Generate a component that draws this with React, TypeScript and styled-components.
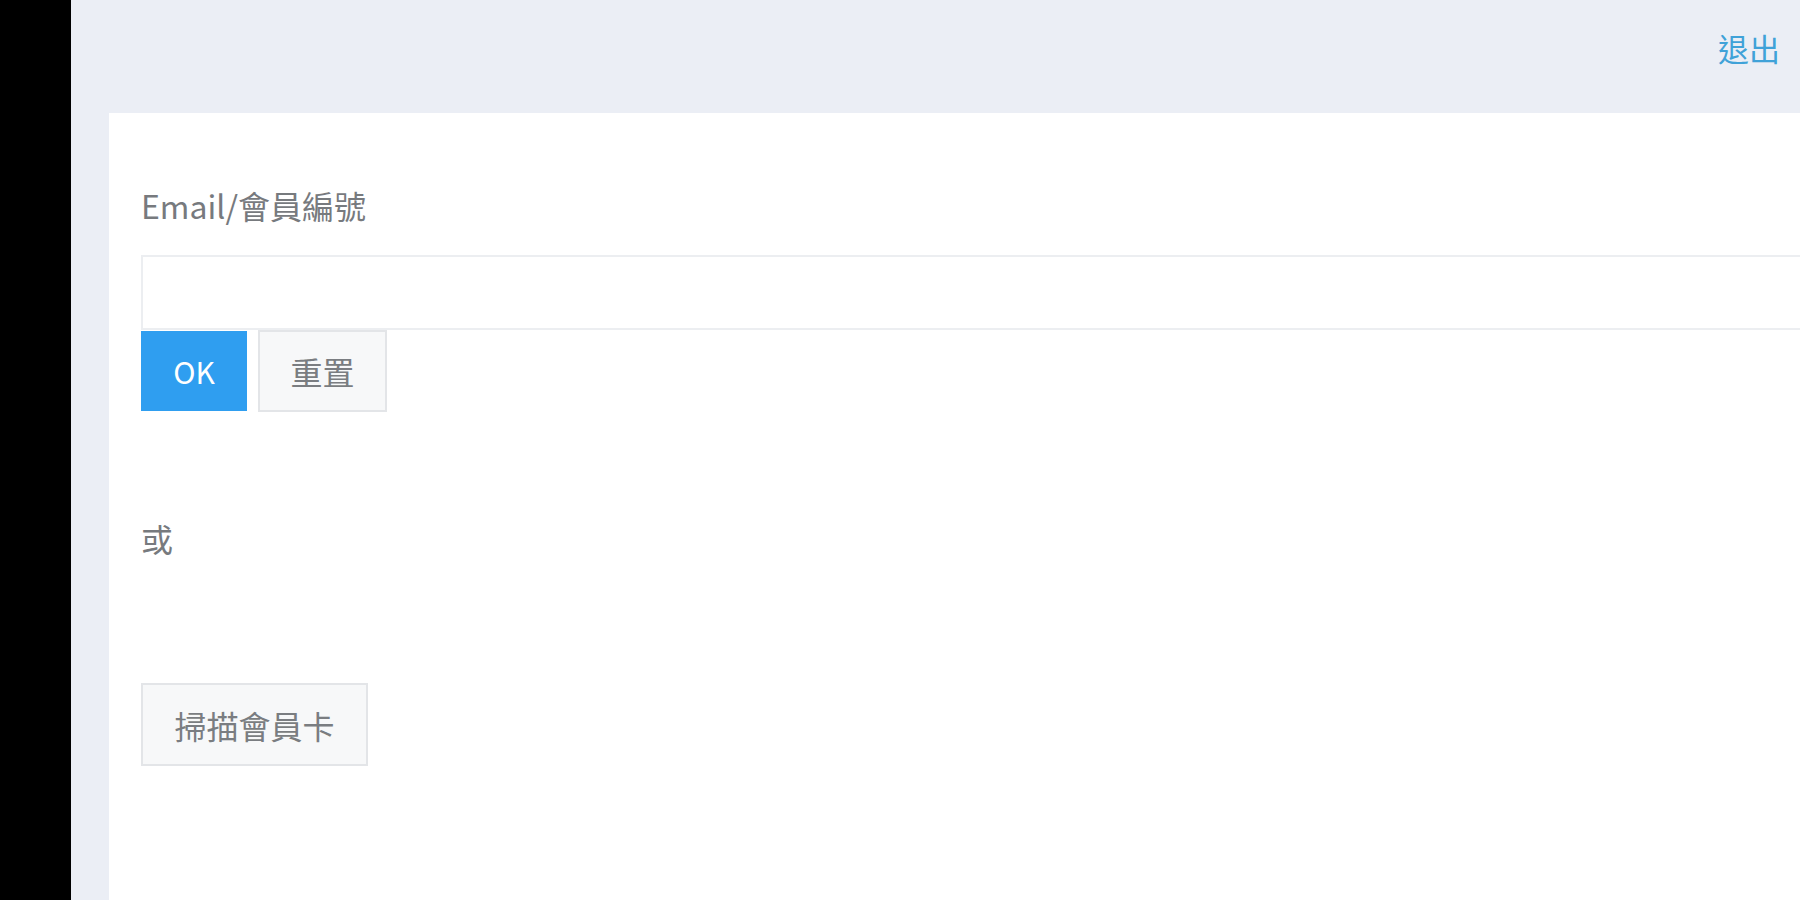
import React from "react";
import styled, { createGlobalStyle } from "styled-components";

const GlobalStyle = createGlobalStyle`
  html, body {
    margin: 0;
    padding: 0;
    height: 100%;
    overflow: hidden;
  }
  body {
    font-family: "Noto Sans CJK TC", "Noto Sans", sans-serif;
  }
  #root { height: 100%; }
  * { box-sizing: border-box; }
`;

const Layout = styled.div`
  display: flex;
  width: 1800px;
  height: 900px;
`;

const Sidebar = styled.aside`
  width: 71px;
  flex: none;
  background: #000;
`;

const Main = styled.main`
  flex: 1;
  display: flex;
  flex-direction: column;
  background: #ebeef5;
  min-width: 0;
`;

const Header = styled.header`
  height: 113px;
  flex: none;
  display: flex;
  align-items: center;
  justify-content: flex-end;
  padding: 0 20px 18px 0;
`;

const LogoutLink = styled.a`
  font-size: 31px;
  line-height: 1;
  color: #40a2d8;
  text-decoration: none;
  cursor: pointer;
`;

const Panel = styled.section`
  flex: 1;
  margin-left: 38px;
  background: #fff;
  padding: 70px 0 0 32px;
  overflow: hidden;
  display: flex;
  flex-direction: column;
  align-items: flex-start;
`;

const FieldLabel = styled.label`
  font-size: 32px;
  line-height: 44px;
  color: #777a7e;
  margin-bottom: 28px;
`;

const TextInput = styled.input`
  display: block;
  width: calc(100% + 40px);
  height: 75px;
  border: 2px solid #eceef1;
  background: #fff;
  outline: none;
  font-size: 28px;
  padding: 0 16px;
`;

const ButtonRow = styled.div`
  display: flex;
  align-items: flex-start;
  gap: 11px;
`;

const Button = styled.button<{ $primary?: boolean }>`
  font-family: "Noto Sans CJK TC", "Noto Sans", sans-serif;
  font-size: ${(p) => (p.$primary ? "30px" : "32px")};
  line-height: 1;
  white-space: nowrap;
  height: ${(p) => (p.$primary ? "80px" : "82px")};
  padding: 0 ${(p) => (p.$primary ? "32px" : "30px")};
  border: ${(p) => (p.$primary ? "none" : "2px solid #e3e5e8")};
  background: ${(p) => (p.$primary ? "#2f9ef0" : "#f7f8f9")};
  color: ${(p) => (p.$primary ? "#fff" : "#7a7d81")};
  margin-top: ${(p) => (p.$primary ? "1px" : "0")};
  min-width: ${(p) => (p.$primary ? "106px" : "129px")};
  cursor: pointer;
`;

const OrText = styled.p`
  margin: 104px 0 0;
  font-size: 32px;
  line-height: 44px;
  color: #777a7e;
`;

const ScanButton = styled(Button)`
  margin-top: 123px;
  width: 227px;
  height: 83px;
  padding: 0;
`;

export default function App() {
  return (
    <>
      <GlobalStyle />
      <Layout>
        <Sidebar />
        <Main>
          <Header>
            <LogoutLink>退出</LogoutLink>
          </Header>
          <Panel>
            <FieldLabel htmlFor="member">Email/會員編號</FieldLabel>
            <TextInput id="member" type="text" />
            <ButtonRow>
              <Button $primary>OK</Button>
              <Button>重置</Button>
            </ButtonRow>
            <OrText>或</OrText>
            <ScanButton>掃描會員卡</ScanButton>
          </Panel>
        </Main>
      </Layout>
    </>
  );
}
